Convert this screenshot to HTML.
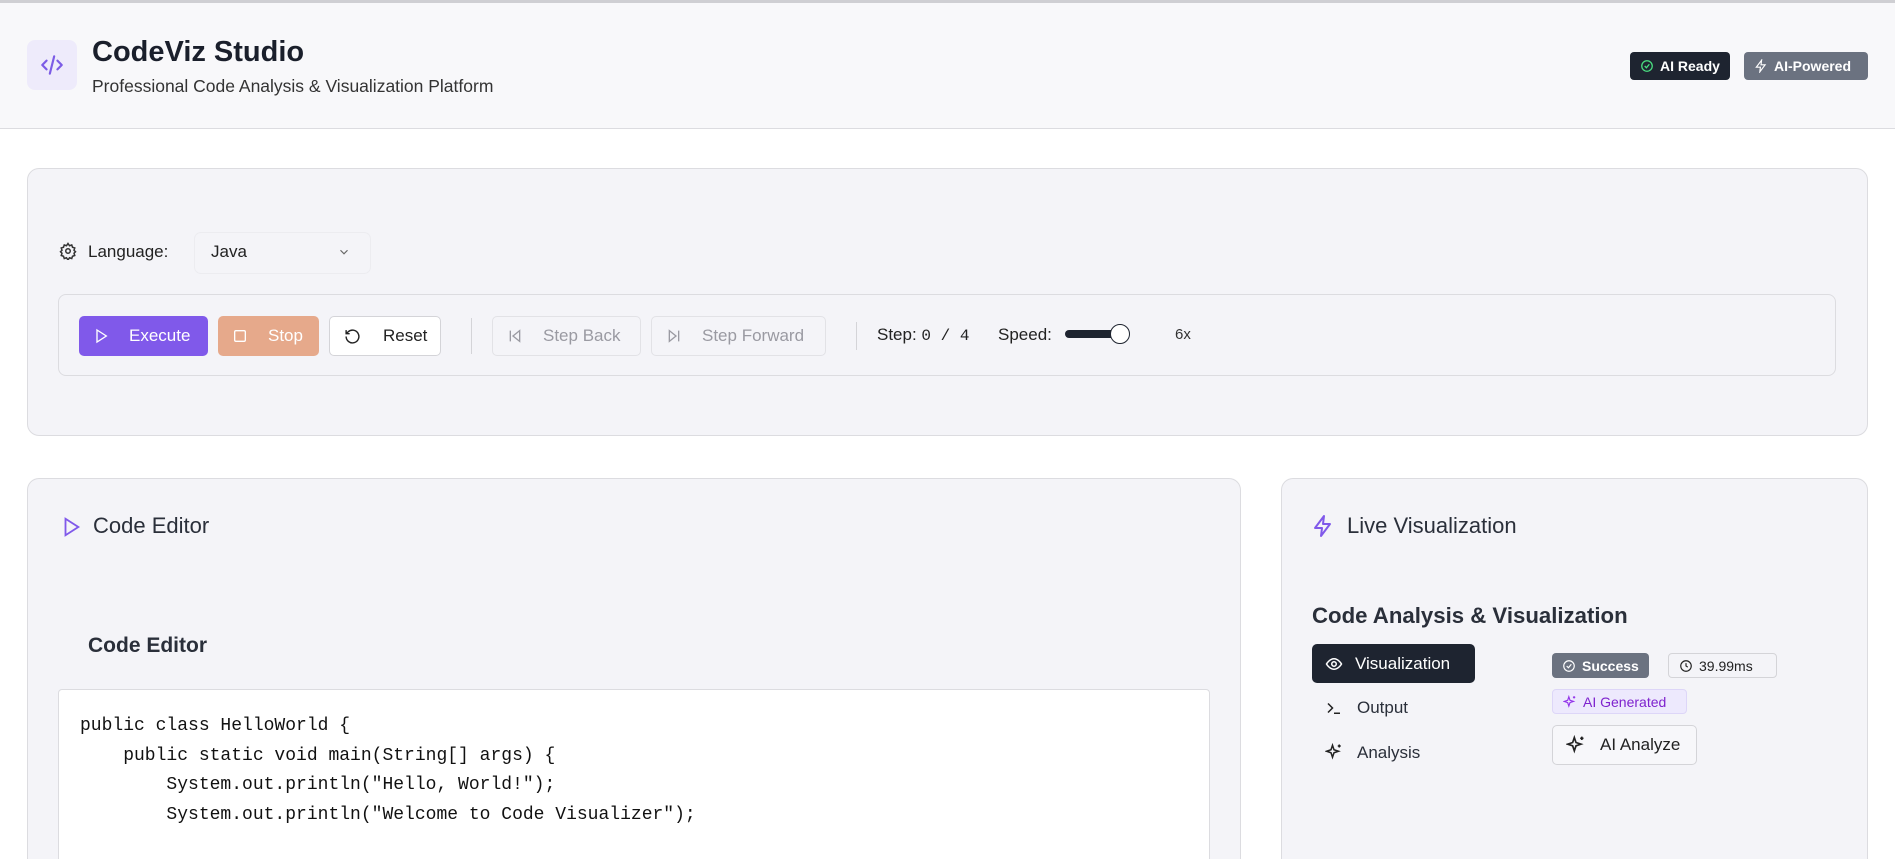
<!DOCTYPE html>
<html style="width:1895px;height:859px;overflow:hidden"><head><meta charset="utf-8"><style>
*{box-sizing:border-box;margin:0;padding:0}
body{width:1895px;height:859px;overflow:hidden;background:#fff;font-family:"Liberation Sans",sans-serif;color:#1f2330}
#w{position:relative;width:1895px;height:859px;overflow:hidden}
.a{position:absolute}
svg{display:block}
.btn{position:absolute;display:flex;align-items:center;border-radius:5px;font-size:17px;height:40px}
.badge{position:absolute;display:flex;align-items:center;border-radius:4px;font-size:14px;font-weight:bold;height:28px;padding:0 10px;gap:6px}
</style></head><body><div id="w">
<div class="a" style="left:0;top:0;width:1895px;height:3px;background:#cfcfd3"></div>
<div class="a" style="left:0;top:3px;width:1895px;height:126px;background:#f8f8fa;border-bottom:1px solid #dcdce0"></div>
<div class="a" style="left:27px;top:40px;width:50px;height:50px;border-radius:8px;background:#eeebfb;display:flex;align-items:center;justify-content:center">
<svg width="26" height="26" viewBox="0 0 24 24" fill="none" stroke="#7c5ce6" stroke-width="2" stroke-linecap="round" stroke-linejoin="round"><path d="M7 8l-4 4 4 4M17 8l4 4-4 4M14 4l-4 16"/></svg></div>
<div class="a" style="left:92px;top:36px;font-size:29px;font-weight:600;color:#1a1f2b">CodeViz Studio</div>
<div class="a" style="left:92px;top:76px;font-size:17.5px;color:#333">Professional Code Analysis &amp; Visualization Platform</div>
<div class="badge" style="left:1630px;top:52px;background:#1e2430;color:#fff"><svg width="14" height="14" viewBox="0 0 24 24" fill="none" stroke="#4ade80" stroke-width="2.2"><circle cx="12" cy="12" r="9"/><path d="M8 12l3 3 5-6"/></svg>AI Ready</div>
<div class="badge" style="left:1744px;top:52px;width:124px;background:#6b7280;color:#fff"><svg width="14" height="14" viewBox="0 0 24 24" fill="none" stroke="#fff" stroke-width="2"><path d="M13 2L4 14h7l-1 8 9-12h-7z"/></svg>AI-Powered</div>

<div class="a" style="left:27px;top:168px;width:1841px;height:268px;background:#f4f4f8;border:1px solid #dcdce0;border-radius:12px"></div>
<svg class="a" style="left:59px;top:242px" width="18" height="18" viewBox="0 0 24 24" fill="none" stroke="#333" stroke-width="2"><circle cx="12" cy="12" r="3"/><path d="M12 2l2 3 3-1 1 3 3 1-1 3 2 2-2 2 1 3-3 1-1 3-3-1-2 3-2-3-3 1-1-3-3-1 1-3-2-2 2-2-1-3 3-1 1-3 3 1z"/></svg>
<div class="a" style="left:88px;top:242px;font-size:17px;color:#222">Language:</div>
<div class="a" style="left:195px;top:233px;width:175px;height:40px;border-radius:6px;background:#f4f4f8;box-shadow:0 0 0 1px #ececf0"></div>
<div class="a" style="left:211px;top:242px;font-size:17px;color:#222">Java</div>
<svg class="a" style="left:337px;top:245px" width="14" height="14" viewBox="0 0 24 24" fill="none" stroke="#666" stroke-width="2"><path d="M6 9l6 6 6-6"/></svg>

<div class="a" style="left:58px;top:294px;width:1778px;height:82px;border:1px solid #dcdce0;border-radius:8px"></div>
<div class="btn" style="left:79px;top:316px;width:129px;background:#8059ea;color:#fff;padding-left:14px;gap:20px"><svg width="16" height="16" viewBox="0 0 24 24" fill="none" stroke="#fff" stroke-width="2"><path d="M6 3l14 9-14 9z"/></svg>Execute</div>
<div class="btn" style="left:218px;top:316px;width:101px;background:#e6a98b;color:#fff;padding-left:14px;gap:20px"><svg width="16" height="16" viewBox="0 0 24 24" fill="none" stroke="#fff" stroke-width="2"><rect x="4" y="4" width="16" height="16" rx="2"/></svg>Stop</div>
<div class="btn" style="left:329px;top:316px;width:112px;background:#fff;border:1px solid #d4d4d8;color:#222;padding-left:14px;gap:22px"><svg width="17" height="17" viewBox="0 0 24 24" fill="none" stroke="#222" stroke-width="2"><path d="M3 12a9 9 0 1 0 3-6.7L3 8M3 3v5h5"/></svg>Reset</div>
<div class="a" style="left:471px;top:318px;width:1px;height:36px;background:#d4d4d8"></div>
<div class="btn" style="left:492px;top:316px;width:149px;border:1px solid #e2e2e6;color:#9a9aa2;padding-left:14px;gap:20px"><svg width="16" height="16" viewBox="0 0 24 24" fill="none" stroke="#9a9aa2" stroke-width="2"><path d="M5 4v16M19 4L9 12l10 8z"/></svg>Step Back</div>
<div class="btn" style="left:651px;top:316px;width:175px;border:1px solid #e2e2e6;color:#9a9aa2;padding-left:14px;gap:20px"><svg width="16" height="16" viewBox="0 0 24 24" fill="none" stroke="#9a9aa2" stroke-width="2"><path d="M19 4v16M5 4l10 8-10 8z"/></svg>Step Forward</div>
<div class="a" style="left:856px;top:322px;width:1px;height:28px;background:#d4d4d8"></div>
<div class="a" style="left:877px;top:325px;font-size:17px;color:#222">Step: <span style="font-family:'Liberation Mono',monospace;font-size:16px">0 / 4</span></div>
<div class="a" style="left:998px;top:325px;font-size:17px;color:#222">Speed:</div>
<div class="a" style="left:1065px;top:330px;width:60px;height:8px;border-radius:4px;background:#1e2430"></div>
<div class="a" style="left:1110px;top:324px;width:20px;height:20px;border-radius:50%;background:#fff;border:1.5px solid #1e2430"></div>
<div class="a" style="left:1175px;top:326px;font-size:15px;color:#333">6x</div>

<div class="a" style="left:27px;top:478px;width:1214px;height:381px;background:#f4f4f8;border:1px solid #dcdce0;border-bottom:none;border-radius:12px 12px 0 0"></div>
<svg class="a" style="left:60px;top:515px" width="22" height="24" viewBox="0 0 24 24" fill="none" stroke="#8059ea" stroke-width="2"><path d="M6 3l14 9-14 9z"/></svg>
<div class="a" style="left:93px;top:513px;font-size:22px;color:#2a2f3a">Code Editor</div>
<div class="a" style="left:88px;top:634px;font-size:21px;font-weight:bold;color:#2a2f3a">Code Editor</div>
<div class="a" style="left:58px;top:689px;width:1152px;height:170px;background:#fff;border:1px solid #dcdce0;border-bottom:none;border-radius:4px 4px 0 0"></div>
<pre class="a" style="left:80px;top:712px;font-family:'Liberation Mono',monospace;font-size:18px;line-height:29.5px;color:#111">public class HelloWorld {
    public static void main(String[] args) {
        System.out.println("Hello, World!");
        System.out.println("Welcome to Code Visualizer");</pre>

<div class="a" style="left:1281px;top:478px;width:587px;height:381px;background:#f4f4f8;border:1px solid #dcdce0;border-bottom:none;border-radius:12px 12px 0 0"></div>
<svg class="a" style="left:1311px;top:514px" width="24" height="24" viewBox="0 0 24 24" fill="none" stroke="#8059ea" stroke-width="2" stroke-linejoin="round"><path d="M13 2L4 14h7l-1 8 9-12h-7z"/></svg>
<div class="a" style="left:1347px;top:513px;font-size:22px;color:#2a2f3a">Live Visualization</div>
<div class="a" style="left:1312px;top:603px;font-size:22.2px;font-weight:bold;color:#2a2f3a">Code Analysis &amp; Visualization</div>
<div class="btn" style="left:1312px;top:644px;width:163px;height:39px;background:#1e2430;color:#fff;padding-left:13px;gap:12px;font-size:17px"><svg width="18" height="18" viewBox="0 0 24 24" fill="none" stroke="#fff" stroke-width="2"><path d="M2 12s4-7 10-7 10 7 10 7-4 7-10 7S2 12 2 12z"/><circle cx="12" cy="12" r="3"/></svg>Visualization</div>
<svg class="a" style="left:1325px;top:699px" width="18" height="18" viewBox="0 0 24 24" fill="none" stroke="#222" stroke-width="2"><path d="M4 6l6 6-6 6M12 19h8"/></svg>
<div class="a" style="left:1357px;top:698px;font-size:17px;color:#2a2f3a">Output</div>
<svg class="a" style="left:1325px;top:743px" width="18" height="18" viewBox="0 0 24 24" fill="none" stroke="#222" stroke-width="2"><path d="M10 3l2 6 6 2-6 2-2 6-2-6-6-2 6-2zM19 2v4M17 4h4"/></svg>
<div class="a" style="left:1357px;top:743px;font-size:17px;color:#2a2f3a">Analysis</div>
<div class="badge" style="left:1552px;top:653px;height:25px;background:#6b7280;color:#fff;font-size:14px"><svg width="14" height="14" viewBox="0 0 24 24" fill="none" stroke="#fff" stroke-width="2"><circle cx="12" cy="12" r="9"/><path d="M8 12l3 3 5-6"/></svg>Success</div>
<div class="badge" style="left:1668px;top:653px;height:25px;width:109px;border:1px solid #d4d4d8;color:#222;font-weight:normal;font-size:14px"><svg width="14" height="14" viewBox="0 0 24 24" fill="none" stroke="#222" stroke-width="2"><circle cx="12" cy="12" r="9"/><path d="M12 7v5l3 2"/></svg>39.99ms</div>
<div class="badge" style="left:1552px;top:689px;height:25px;width:135px;background:#ede9fd;border:1px solid #ddd6f8;color:#7e22ce;font-weight:normal;font-size:14px"><svg width="14" height="14" viewBox="0 0 24 24" fill="none" stroke="#9333ea" stroke-width="2"><path d="M10 3l2 6 6 2-6 2-2 6-2-6-6-2 6-2zM19 2v4M17 4h4"/></svg>AI Generated</div>
<div class="btn" style="left:1552px;top:725px;width:145px;height:40px;border:1px solid #d4d4d8;background:#f7f7fa;color:#222;padding-left:13px;gap:14px"><svg width="20" height="20" viewBox="0 0 24 24" fill="none" stroke="#222" stroke-width="2"><path d="M10 3l2 6 6 2-6 2-2 6-2-6-6-2 6-2zM19 2v4M17 4h4"/></svg>AI Analyze</div>
</div></body></html>
